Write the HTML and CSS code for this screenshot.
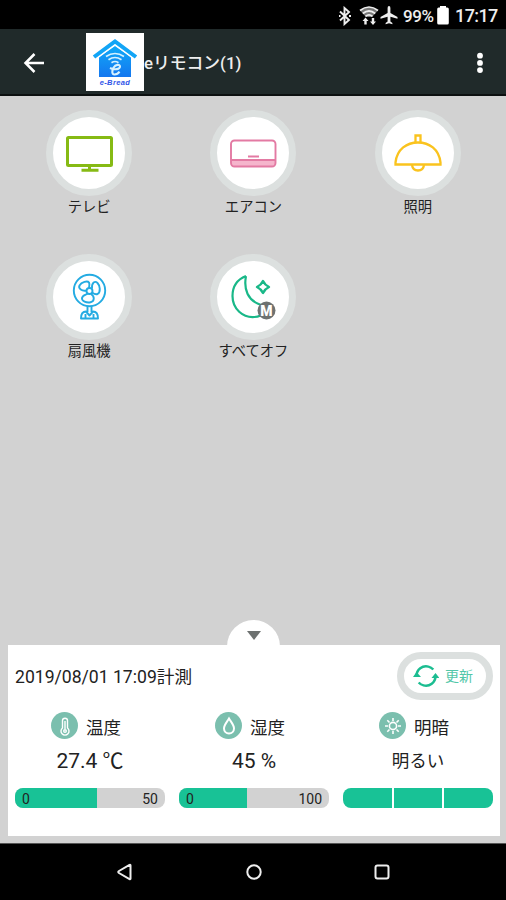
FILE: index.html
```html
<!DOCTYPE html>
<html lang="ja">
<head>
<meta charset="utf-8">
<title>eリモコン</title>
<link rel="stylesheet" href="styles.css">
</head>
<body>
<div class="phone">
  <div class="status">
    <svg class="bluetooth" width="14" height="20" viewBox="0 0 14 20"><path d="M2 5.500l9 8.500-4.500 4V2L11 6l-9 8.500M1 10h1.500M11 10h2" fill="none" stroke="#eee" stroke-width="1.900"/></svg>
    <svg class="wifi" width="20" height="21" viewBox="0 0 20 21"><path d="M1 5.500Q10-1.500 19 5.500L13 12H7z" fill="#777"/><g fill="none" stroke="#eee" stroke-width="1.700"><path d="M1 5.500Q10-1.500 19 5.500M3.800 8.500q6.200-5 12.400 0M6.500 11.300q3.500-3 7 0"/></g><path d="M6.500 12.500l3 3.500H7.700v3.500H5.300V16H3.500zM14 20l3-3.500h-1.800V13h-2.400v3.500H11z" fill="#eee"/></svg>
    <svg class="plane" width="18" height="19" viewBox="0 0 18 19"><path d="M9 0q1.400 0 1.400 2v5L17.500 11v1.800l-7.100-2v4.700l2 1.500v1.200L9 17.300l-3.400.9V17l2-1.500v-4.700l-7.100 2V11l7.100-4V2Q7.600 0 9 0z" fill="#eee"/></svg>
    <span class="percent">99%</span>
    <svg class="battery" width="12" height="19" viewBox="0 0 12 19"><path d="M3 0h6v1.500h1.300q1.500 0 1.500 1.500v14q0 1.500-1.500 1.500H1.700Q.2 18.500.2 17V3Q.2 1.500 1.700 1.500H3z" fill="#fff"/></svg>
    <span class="clock">17:17</span>
  </div>
  <header class="appbar">
    <svg class="back" width="22" height="22" viewBox="0 0 22 22"><path d="M11.500 2L2.500 11l9 9M2.500 11H21" fill="none" stroke="#fff" stroke-width="2.500"/></svg>
    <div class="logo">
      <svg width="46" height="39" viewBox="0 0 46 39"><defs><linearGradient id="house" x1="0" y1="0" x2="0" y2="1"><stop offset="0" stop-color="#10a9f8"/><stop offset="1" stop-color="#1477ef"/></linearGradient></defs><path d="M7 18L23 7l16 11v20H7z" fill="url(#house)"/><path d="M1 21.500L23 5l22 16.500" fill="none" stroke="#fff" stroke-width="2.500"/><path d="M2 18L23 2.500 44 18" fill="none" stroke="#12a5f6" stroke-width="4"/><g fill="none" stroke="#d5f1ff" stroke-width="1.700"><path d="M14 17.500q9-6 18 0M16.500 20.700q6.500-4.400 13 0M19.500 23.700q3.500-2.400 7 0"/><path d="M18 29c5 2.500 10 1 10-1.500s-4.500-2.200-6.500 1.200-1.500 6.800 1 6.800 4-1.300 5-2.800" stroke-width="2.100"/></g></svg>
      <span class="brand">e-Bread</span>
    </div>
    <h1 class="title">eリモコン(1)</h1>
    <svg class="more" width="8" height="22" viewBox="0 0 8 22"><g fill="#fff"><circle cx="4" cy="3.700" r="2.900"/><circle cx="4" cy="10.900" r="2.900"/><circle cx="4" cy="18.100" r="2.900"/></g></svg>
  </header>
  <main class="content">
    <div class="devices">
      <div class="device"><div class="disc"><svg width="50" height="50" viewBox="0 0 50 50"><g fill="none" stroke="#86ba14" stroke-width="3"><rect x="3.500" y="9.500" width="44" height="28" rx="1"/><path d="M25.500 38v4M17.500 42.300h17"/></g></svg></div><span>テレビ</span></div>
      <div class="device"><div class="disc"><svg width="50" height="50" viewBox="0 0 50 50"><path d="M3 32h44v4q0 2-2 2H5q-2 0-2-2z" fill="#f5b5cc"/><g fill="none" stroke="#e37aa3" stroke-width="1.900"><rect x="3" y="12.500" width="44.500" height="26" rx="3.500"/><path d="M3 32h44.500M20 28.500h11"/></g></svg></div><span>エアコン</span></div>
      <div class="device"><div class="disc"><svg width="50" height="50" viewBox="0 0 50 50"><g fill="none" stroke="#fac31e" stroke-width="2.300"><path d="M2.500 36.500v-2C4 21 14 14.500 25 14.500S46 21 47.500 34.500v2z"/><path d="M22.500 14.500v-7h5v7M19 37c.5 3.500 3 5.500 6 5.500s5.500-2 6-5.500"/></g></svg></div><span>照明</span></div>
      <div class="device"><div class="disc"><svg width="50" height="50" viewBox="0 0 50 50"><g fill="none" stroke="#24abe2" stroke-width="1.900" stroke-linejoin="round"><circle cx="25.500" cy="18.500" r="15.700"/><circle cx="25.500" cy="19" r="3"/><path d="M22.500 18.500C18 19.500 14 16.500 15.500 13.500c2-3.500 8-5 9.500-3 1 2 0 4 0 5.500M28 16.500C27.500 10.500 31 8.500 33.500 11s3.500 9 0 11c-2 .8-4-.5-5.500-1.500M27 22c4 2.500 3.500 7.500-.5 8.300s-9-1.300-8.500-4.300 3.500-3 6-4.500M23.500 34v6M27.500 34v6M17 46.500c0-4.500 1.500-7 5-7l3.500 4 3.500-4c3.500 0 5 2.500 5 7zM21.500 42v4M29.500 42v4"/></g></svg></div><span>扇風機</span></div>
      <div class="device"><div class="disc"><svg width="50" height="50" viewBox="0 0 50 50"><g fill="none" stroke="#19b888" stroke-width="2.200"><path d="M18 4C8 8 4.500 16 4.500 24c0 13 10.500 22 22 21 2 0 4-.5 6-1.500M18 4c-2.500 13 1.500 24.500 15 29"/><path d="M35 9q1.800 4 6 6-4.200 2-6 6-1.800-4-6-6 4.200-2 6-6z" stroke-width="2.400" stroke-linejoin="round"/></g><circle cx="38.500" cy="38.500" r="9" fill="#6e7271"/><text x="38.500" y="43.500" text-anchor="middle" class="badge-letter">M</text></svg></div><span>すべてオフ</span></div>
    </div>
    <section class="panel">
      <div class="handle"><svg width="14" height="9" viewBox="0 0 14 9"><path d="M0 0h14L7 9z" fill="#6d7170"/></svg></div>
      <div class="panel-head">
        <span class="measured">2019/08/01 17:09計測</span>
        <div class="refresh"><svg width="26" height="24" viewBox="0 0 26 24"><g fill="none" stroke="#1bbd91" stroke-width="2.500"><path d="M3.500 12c0-6.500 6-11 12-9.400 1.800.4 3.500 1.500 4.800 2.900M22.500 12c0 6.500-6 11-12 9.400-1.800-.4-3.500-1.500-4.800-2.900"/></g><path d="M3.500 8L8 13H0zM22.500 9l4 5h-8z" fill="#1bbd91"/></svg><span>更新</span></div>
      </div>
      <div class="readings">
        <div class="reading">
          <div class="kind"><i><svg width="26" height="26" viewBox="0 0 26 26"><g fill="none" stroke="#fff" stroke-width="1.400"><path d="M10.500 15V7.500q0-2.300 2.500-2.300t2.500 2.300V15a4 4 0 1 1-5 0z"/><path d="M13 8v8"/><circle cx="13" cy="18" r="1.300"/></g></svg></i><span>温度</span></div>
          <div class="value">27.4 ℃</div>
          <div class="bar"><div class="fill" style="width:54.500%"></div><span>0</span><span>50</span></div>
        </div>
        <div class="reading">
          <div class="kind"><i><svg width="26" height="26" viewBox="0 0 26 26"><path d="M13 5.500C11 9 8 12 8 15.500a5 5 0 0 0 10 0C18 12 15 9 13 5.500z" fill="none" stroke="#fff" stroke-width="2"/></svg></i><span>湿度</span></div>
          <div class="value">45 %</div>
          <div class="bar"><div class="fill" style="width:45%"></div><span>0</span><span>100</span></div>
        </div>
        <div class="reading">
          <div class="kind"><i><svg width="26" height="26" viewBox="0 0 26 26"><g fill="none" stroke="#fff" stroke-width="1.600"><circle cx="13" cy="13" r="3.600"/><path d="M13 5v3M13 18v3M5 13h3M18 13h3M7.300 7.300l2.200 2.200M16.500 16.500l2.200 2.200M18.700 7.300l-2.200 2.200M9.500 16.500l-2.200 2.200"/></g></svg></i><span>明暗</span></div>
          <div class="value">明るい</div>
          <div class="levels"><b></b><b></b><b></b></div>
        </div>
      </div>
    </section>
  </main>
  <nav class="navbar">
    <svg width="18" height="18" viewBox="0 0 18 18"><path d="M14.500 2.500v13q0 1-1 .5L3 10Q1.500 9 3 8L13.500 2q1-.5 1 .5z" fill="none" stroke="#eee" stroke-width="2"/></svg>
    <svg width="18" height="18" viewBox="0 0 18 18"><circle cx="9" cy="9" r="6.700" fill="none" stroke="#eee" stroke-width="2"/></svg>
    <svg width="18" height="18" viewBox="0 0 18 18"><rect x="2.500" y="2.500" width="13" height="13" rx="2" fill="none" stroke="#eee" stroke-width="2"/></svg>
  </nav>
</div>
</body>
</html>
```
FILE: styles.css
```css
* { box-sizing: border-box; }
body { margin: 0; font-family: Roboto, "Noto Sans CJK JP", sans-serif; color: #222; }
svg { display: block; flex: none; }
.phone { width: 506px; height: 900px; display: flex; flex-direction: column; overflow: hidden; background: #000; }
.status { height: 29px; display: flex; align-items: center; padding: 2px 8px 0 338px; color: #eee; font-size: 18px; line-height: 22px; font-weight: 500; white-space: nowrap; }
.wifi { margin-left: 7px; }
.plane { margin-left: 1px; }
.percent { margin-left: 5px; width: 32px; font-size: 17px; letter-spacing: -0.4px; }
.battery { margin-left: 2px; }
.clock { margin-left: 6px; letter-spacing: -0.6px; }
.appbar { height: 67px; background: #202a2a; border-bottom: 2px solid #0c1010; display: flex; align-items: center; padding: 0 22px 0 23px; color: #eee; }
.appbar .back { margin-top: 2px; }
.logo { margin: 1px 0 0 41px; width: 58px; height: 58px; background: #fff; display: flex; flex-direction: column; align-items: center; padding-top: 6px; }
.brand { font: italic bold 7.500px/10px "Liberation Sans", sans-serif; letter-spacing: 0.4px; color: #3155e8; }
.title { margin: 0; font-size: 16.800px; line-height: 24px; font-weight: 500; flex: 1; padding-top: 3px; white-space: nowrap; }
.appbar .more { margin-top: 2px; }
.content { flex: 1; background: #d2d2d2; display: flex; flex-direction: column; justify-content: space-between; padding: 14px 6px 7px 7px; }
.devices { display: grid; grid-template-columns: repeat(3, 164.300px); grid-auto-rows: 143.500px; }
.device { display: flex; flex-direction: column; align-items: center; font-size: 14.300px; line-height: 23px; }
.disc { width: 86px; height: 86px; border: 7px solid #dce0df; border-radius: 50%; background: #fff; display: flex; align-items: center; justify-content: center; }
.badge-letter { font-size: 14px; font-weight: 900; fill: #fff; }
.panel { position: relative; height: 191px; margin-left: 1px; background: #fff; padding: 7px 7px 0; }
.handle { position: absolute; left: 219px; top: -25px; width: 53px; height: 27px; border-radius: 27px 27px 0 0; background: #fff; display: flex; justify-content: center; padding-top: 11px; }
.panel-head { display: flex; justify-content: space-between; align-items: center; }
.measured { font-size: 17.600px; line-height: 24px; padding-top: 2px; }
.refresh { width: 96px; height: 48px; border: 7px solid #dce0df; border-radius: 24px; display: flex; align-items: center; padding-left: 9px; gap: 6px; font-size: 14px; line-height: 20px; color: #52c7a8; }
.readings { display: grid; grid-template-columns: repeat(3, 150px); column-gap: 14px; margin-top: 12px; }
.reading { display: flex; flex-direction: column; }
.kind { display: flex; align-items: center; justify-content: center; gap: 8px; padding-right: 8px; height: 27px; font-size: 17.500px; line-height: 27px; }
.kind span { padding-top: 5px; }
.kind i { width: 27px; height: 27px; border-radius: 50%; background: #7bbfae; display: flex; align-items: center; justify-content: center; }
.value { text-align: center; font-size: 21px; line-height: 28px; margin-top: 8px; height: 28px; }
.reading:last-child .value { font-size: 17.500px; }
.bar, .levels { height: 20px; margin-top: 13px; border-radius: 8px; overflow: hidden; display: flex; }
.bar { position: relative; background: #d2d2d2; justify-content: space-between; align-items: center; padding: 2px 7px 0; font-size: 14px; line-height: 18px; }
.fill { position: absolute; left: 0; top: 0; height: 20px; background: #18c296; }
.bar span { position: relative; }
.levels { gap: 2px; }
.levels b { flex: 1; background: #18c296; }
.navbar { height: 57px; border-top: 1px solid #555; display: flex; justify-content: space-between; align-items: center; padding: 0 115px 0 116px; }
```
